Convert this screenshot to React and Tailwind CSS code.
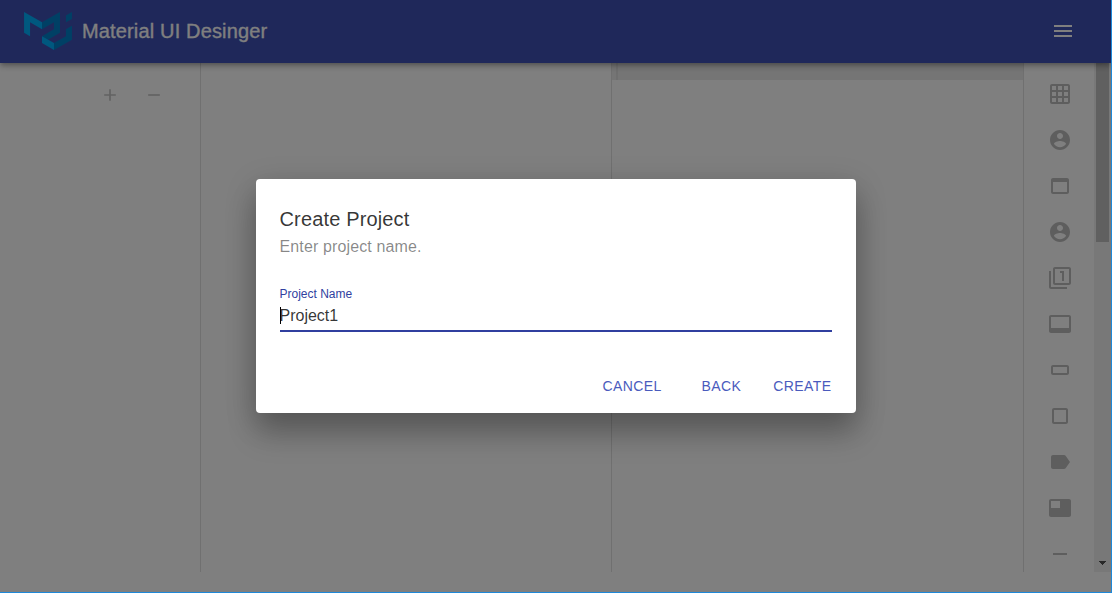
const ICONS = [
  "M20 2H4c-1.1 0-2 .9-2 2v16c0 1.1.9 2 2 2h16c1.1 0 2-.9 2-2V4c0-1.1-.9-2-2-2zM8 20H4v-4h4v4zm0-6H4v-4h4v4zm0-6H4V4h4v4zm6 12h-4v-4h4v4zm0-6h-4v-4h4v4zm0-6h-4V4h4v4zm6 12h-4v-4h4v4zm0-6h-4v-4h4v4zm0-6h-4V4h4v4z",
  "M12 2C6.48 2 2 6.48 2 12s4.48 10 10 10 10-4.48 10-10S17.52 2 12 2zm0 3c1.66 0 3 1.34 3 3s-1.34 3-3 3-3-1.34-3-3 1.34-3 3-3zm0 14.2c-2.5 0-4.71-1.28-6-3.22.03-1.99 4-3.08 6-3.08 1.99 0 5.97 1.09 6 3.08-1.29 1.94-3.5 3.22-6 3.22z",
  "M19 4H5c-1.11 0-2 .9-2 2v12c0 1.1.89 2 2 2h14c1.1 0 2-.9 2-2V6c0-1.1-.89-2-2-2zm0 14H5V8h14v10z",
  "M12 2C6.48 2 2 6.48 2 12s4.48 10 10 10 10-4.48 10-10S17.52 2 12 2zm0 3c1.66 0 3 1.34 3 3s-1.34 3-3 3-3-1.34-3-3 1.34-3 3-3zm0 14.2c-2.5 0-4.71-1.28-6-3.22.03-1.99 4-3.08 6-3.08 1.99 0 5.97 1.09 6 3.08-1.29 1.94-3.5 3.22-6 3.22z",
  "M3 5H1v16c0 1.1.9 2 2 2h16v-2H3V5zm11 10h2V5h-4v2h2v8zm7-14H7c-1.1 0-2 .9-2 2v14c0 1.1.9 2 2 2h14c1.1 0 2-.9 2-2V3c0-1.1-.9-2-2-2zm0 16H7V3h14v14z",
  "M21 3H3c-1.11 0-2 .89-2 2v14c0 1.1.89 2 2 2h18c1.1 0 2-.9 2-2V5c0-1.11-.9-2-2-2zm0 13H3V5h18v11z",
  "M19 7H5c-1.1 0-2 .9-2 2v6c0 1.1.9 2 2 2h14c1.1 0 2-.9 2-2V9c0-1.1-.9-2-2-2zm0 8H5V9h14v6z",
  "M18 4H6c-1.1 0-2 .9-2 2v12c0 1.1.9 2 2 2h12c1.1 0 2-.9 2-2V6c0-1.1-.9-2-2-2zm0 14H6V6h12v12z",
  "M17.63 5.84C17.27 5.33 16.67 5 16 5L5 5.01C3.9 5.01 3 5.9 3 7v10c0 1.1.9 1.99 2 1.99L16 19c.67 0 1.27-.33 1.63-.84L22 12l-4.37-6.16z",
  "M21 3H3c-1.1 0-2 .9-2 2v14c0 1.1.9 2 2 2h18c1.1 0 2-.9 2-2V5c0-1.1-.9-2-2-2zm-9 9H3V5h9v7z",
  "M5 11h14v2H5z",
];

function Icon({ d, className = "size-6" }) {
  return (
    <svg viewBox="0 0 24 24" fill="currentColor" className={`shrink-0 ${className}`}>
      <path d={d} />
    </svg>
  );
}

function Logo() {
  return (
    <svg viewBox="0 0 600 476.3" className="h-[38px] w-12 shrink-0">
      <path fill="#00b0ff" d="M0 259.8V0l225 129.9v86.6L75 129.9v173.2z" />
      <path fill="#0081cb" d="M225 129.9L450 0v259.8l-150 86.6-75-43.3 150-86.6v-86.6L225 216.5z" />
      <path fill="#00b0ff" d="M225 303.1v86.6l150 86.6v-86.6z" />
      <path fill="#0081cb" d="M375 476.3l225-129.9V173.2l-75 43.3v86.6l-150 86.6v86.6zM525 129.9V43.3L600 0v86.6z" />
    </svg>
  );
}

function Header() {
  return (
    <header className="relative z-10 flex h-[63px] shrink-0 items-center bg-[#3f51b5] pr-9 pb-[2px] pl-6 text-white shadow-[0_2px_4px_-1px_rgba(0,0,0,0.2),0_4px_5px_0_rgba(0,0,0,0.14),0_1px_10px_0_rgba(0,0,0,0.12)]">
      <Logo />
      <h1 className="ml-2.5 grow text-xl tracking-[0.15px] [-webkit-text-stroke:0.3px]">Material UI Desinger</h1>
      <Icon d="M3 18h18v-2H3v2zm0-5h18v-2H3v2zm0-7v2h18V6H3z" />
    </header>
  );
}

function Palette() {
  return (
    <aside className="flex w-[88px] shrink-0 border-l border-[#e0e0e0]">
      <div className="flex w-[70px] flex-col items-center gap-[22px] overflow-hidden pt-[19px] pl-[2px] text-[#bdbdbd]">
        {ICONS.map((d, i) => (
          <Icon key={i} d={d} />
        ))}
      </div>
      <div className="flex w-[17px] flex-col items-center justify-between bg-[#f1f1f1]">
        <div className="h-[179px] w-[13px] bg-[#c1c1c1]" />
        <svg viewBox="0 0 17 17" className="size-[17px]">
          <path d="M5 6h7v1h-1v1h-1v1H9v1H8V9H7V8H6V7H5z" fill="#505050" />
        </svg>
      </div>
    </aside>
  );
}

function Workspace() {
  return (
    <main className="flex h-[509px] shrink-0">
      <section className="flex w-[201px] gap-6 border-r border-[#e0e0e0] pt-[22px] pl-[100px] text-[#c4c4c4]">
        <Icon className="size-5" d="M19 13h-6v6h-2v-6H5v-2h6V5h2v6h6v2z" />
        <Icon className="size-5" d="M19 13H5v-2h14v2z" />
      </section>
      <section className="w-[411px] border-r border-[#e0e0e0]" />
      <section className="w-[411px]">
        <div className="flex h-[17px] bg-[#ebebeb] pl-1">
          <div className="w-[2px] bg-[#dedede]" />
        </div>
      </section>
      <Palette />
    </main>
  );
}

function DialogButton({ children, className = "" }) {
  return (
    <button className={`h-9 px-2 text-sm tracking-[0.4px] text-[#4a5bbd] uppercase ${className}`}>{children}</button>
  );
}

function CreateProjectDialog() {
  return (
    <div
      role="dialog"
      className="flex h-[234px] w-[600px] flex-col rounded bg-white text-black/80 shadow-[0_8px_32px_0_rgba(0,0,0,0.2),0_22px_30px_0_rgba(0,0,0,0.2)]"
    >
      <div className="flex flex-col px-6 pt-6">
        <h2 className="text-xl leading-8 tracking-[0.15px]">Create Project</h2>
        <p className="text-base leading-6 tracking-[0.13px] text-black/48">Enter project name.</p>
        <label className="mt-[27px] text-xs leading-4 text-[#303f9f]">Project Name</label>
        <div className="flex h-[30px] items-center border-b-2 border-[#303f9f]">
          <span className="-mr-px mb-[2px] h-[17px] w-px bg-black" />
          <span className="text-base leading-5">Project1</span>
        </div>
      </div>
      <div className="mt-[36px] flex justify-end pr-4">
        <DialogButton className="mr-6">Cancel</DialogButton>
        <DialogButton className="mr-4">Back</DialogButton>
        <DialogButton>Create</DialogButton>
      </div>
    </div>
  );
}

export default function App() {
  return (
    <div className="relative flex h-[593px] w-[1112px] flex-col overflow-hidden border-r border-b border-[#1e88d8] bg-white font-['Liberation_Sans',Arial,sans-serif]">
      <Header />
      <Workspace />
      <div className="absolute inset-0 z-20 flex items-center justify-center bg-black/50">
        <CreateProjectDialog />
      </div>
    </div>
  );
}
